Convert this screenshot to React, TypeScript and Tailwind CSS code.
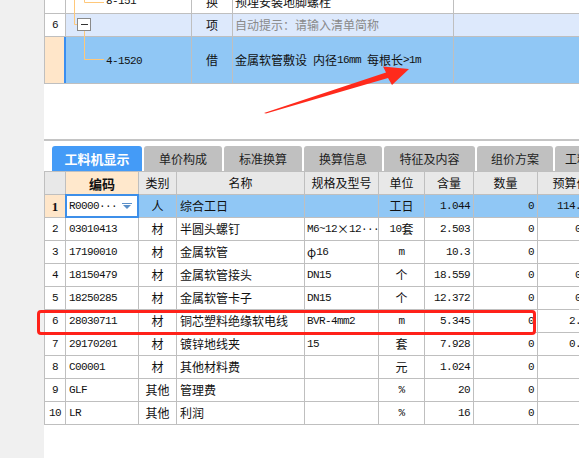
import { Fragment } from "react"

const mono = "font-['Liberation_Mono',monospace] text-[11px] tracking-[-0.6px]"

function Mixed({ text }: { text: string }) {
  const parts = text.split(/([\x20-\x7e·]+)/).filter((p) => p !== "")
  return (
    <>
      {parts.map((p, i) =>
        /^[\x20-\x7e·]+$/.test(p) ? (
          <span key={i} className={`${mono} whitespace-pre`}>
            {p}
          </span>
        ) : (
          <Fragment key={i}>{p}</Fragment>
        )
      )}
    </>
  )
}

type Row = {
  n: number
  code: string
  cat: string
  name: string
  spec: string
  unit: string
  qty: string
  num: string
  price: string
}

const rows: Row[] = [
  { n: 1, code: "R0000···", cat: "人", name: "综合工日", spec: "", unit: "工日", qty: "1.044", num: "0", price: "114.69" },
  { n: 2, code: "03010413", cat: "材", name: "半圆头螺钉", spec: "M6~12×12···", unit: "10套", qty: "2.503", num: "0", price: "0.3" },
  { n: 3, code: "17190010", cat: "材", name: "金属软管", spec: "φ16", unit: "m", qty: "10.3", num: "0", price: "12" },
  { n: 4, code: "18150479", cat: "材", name: "金属软管接头", spec: "DN15", unit: "个", qty: "18.559", num: "0", price: "0.6" },
  { n: 5, code: "18250285", cat: "材", name: "金属软管卡子", spec: "DN15", unit: "个", qty: "12.372", num: "0", price: "0.5" },
  { n: 6, code: "28030711", cat: "材", name: "铜芯塑料绝缘软电线", spec: "BVR-4mm2", unit: "m", qty: "5.345", num: "0", price: "2.05" },
  { n: 7, code: "29170201", cat: "材", name: "镀锌地线夹", spec: "15", unit: "套", qty: "7.928", num: "0", price: "0.35" },
  { n: 8, code: "C00001", cat: "材", name: "其他材料费", spec: "", unit: "元", qty: "1.024", num: "0", price: "" },
  { n: 9, code: "GLF", cat: "其他", name: "管理费", spec: "", unit: "%", qty: "20", num: "0", price: "" },
  { n: 10, code: "LR", cat: "其他", name: "利润", spec: "", unit: "%", qty: "16", num: "0", price: "" },
]

const tabs = [
  { label: "单价构成", w: "w-[78px]" },
  { label: "标准换算", w: "w-[78px]" },
  { label: "换算信息", w: "w-[78px]" },
  { label: "特征及内容", w: "w-[91px]" },
  { label: "组价方案", w: "w-[76px]" },
  { label: "工料机汇总", w: "w-[80px]" },
]

const bd = "border-[#bfbfbf]"

function TopTable() {
  return (
    <div className={`border-l ${bd}`}>
      {/* partly scrolled row */}
      <div className={`flex h-[14px] border-b ${bd} overflow-hidden`}>
        <div className={`w-[21px] shrink-0 border-r ${bd}`} />
        <div className={`w-[126px] shrink-0 border-r ${bd} overflow-hidden`}>
          <div className={`-mt-[10px] h-[23px] flex items-center pl-[40px] ${mono}`}>8-151</div>
        </div>
        <div className={`w-[41px] shrink-0 border-r ${bd} overflow-hidden`}>
          <div className="-mt-[10px] h-[23px] flex items-center justify-center">换</div>
        </div>
        <div className={`w-[221px] shrink-0 border-r ${bd} overflow-hidden`}>
          <div className="-mt-[10px] h-[23px] flex items-center pl-[2px]">预埋安装地脚螺栓</div>
        </div>
        <div className="flex-1" />
      </div>
      <div className={`flex h-[23px] border-b ${bd} bg-[#dde9fc]`}>
        <div className={`w-[21px] shrink-0 border-r ${bd} bg-white flex items-center justify-center ${mono}`}>6</div>
        <div className={`w-[126px] shrink-0 border-r ${bd}`} />
        <div className={`w-[41px] shrink-0 border-r ${bd} flex items-center justify-center`}>项</div>
        <div className={`w-[221px] shrink-0 border-r ${bd} flex items-center pl-[2px] text-[#8a8a8a]`}>
          自动提示：请输入清单简称
        </div>
        <div className="flex-1" />
      </div>
      <div className={`flex h-[47px] border-b ${bd} bg-[#90c7f5]`}>
        <div className={`w-[21px] shrink-0 border-r ${bd} bg-[#ffe6c9]`} />
        <div className={`w-[126px] shrink-0 border-r ${bd} flex items-center pl-[40px] pt-[3px] ${mono}`}>4-1520</div>
        <div className={`w-[41px] shrink-0 border-r ${bd} flex items-center justify-center`}>借</div>
        <div className={`w-[221px] shrink-0 border-r ${bd} flex items-center pl-[2px]`}>
          <Mixed text="金属软管敷设 内径16mm 每根长>1m" />
        </div>
        <div className="flex-1" />
      </div>
    </div>
  )
}

function Tabs() {
  return (
    <div className="flex gap-[2px] pl-[8px] h-[25px] mt-[5px]">
      <div className="w-[90px] shrink-0 rounded-t-[3px] bg-[#449bf7] text-white font-bold text-[13px] flex items-center justify-center">
        工料机显示
      </div>
      {tabs.map((t) => (
        <div
          key={t.label}
          className={`${t.w} shrink-0 rounded-t-[3px] bg-[#c0c0c0] text-[#1e1e1e] flex items-center justify-center`}
        >
          {t.label}
        </div>
      ))}
    </div>
  )
}

function Dropdown() {
  return (
    <svg width="10" height="6" viewBox="0 0 10 6" className="shrink-0">
      <rect x="0" y="0" width="10" height="1" fill="#5a8fc8" />
      <path d="M1 2 L9 2 L5 6 Z" fill="#5a8fc8" />
    </svg>
  )
}

function BottomTable() {
  const cell = `shrink-0 border-r ${bd} flex items-center`
  return (
    <div className={`border-l border-t ${bd} w-[600px]`}>
      <div className={`flex h-[23px] border-b ${bd} bg-[#e8e8e8]`}>
        <div className={`w-[21px] ${cell}`} />
        <div className={`w-[73px] ${cell} justify-center bg-[#ffe8cc] font-bold text-[13px]`}>编码</div>
        <div className={`w-[38px] ${cell} justify-center`}>类别</div>
        <div className={`w-[128px] ${cell} justify-center`}>名称</div>
        <div className={`w-[74px] ${cell} justify-center`}>规格及型号</div>
        <div className={`w-[46px] ${cell} justify-center`}>单位</div>
        <div className={`w-[49px] ${cell} justify-center`}>含量</div>
        <div className={`w-[64px] ${cell} justify-center`}>数量</div>
        <div className={`w-[66px] ${cell} justify-center`}>预算价</div>
      </div>
      {rows.map((r) => {
        const sel = r.n === 1
        return (
          <div key={r.n} className={`flex h-[23px] border-b ${bd} ${sel ? "bg-[#90c7f5]" : "bg-white"}`}>
            <div
              className={`w-[21px] ${cell} justify-center ${
                sel ? "bg-[#ffe6c9] font-['Liberation_Serif',serif] font-bold text-[13px]" : mono
              }`}
            >
              {r.n}
            </div>
            <div className={`w-[73px] ${cell} relative pl-[3px] ${sel ? "bg-white" : ""}`}>
              <span className={`${mono} flex-1`}>{r.code}</span>
              {sel && (
                <>
                  <span className="mr-[6px]">
                    <Dropdown />
                  </span>
                  <span className="absolute -inset-px border-2 border-[#3d8fe9] z-10" />
                </>
              )}
            </div>
            <div className={`w-[38px] ${cell} justify-center`}>{r.cat}</div>
            <div className={`w-[128px] ${cell} pl-[3px]`}>{r.name}</div>
            <div className={`w-[74px] ${cell} pl-[2px] whitespace-nowrap overflow-hidden`}>
              <Mixed text={r.spec} />
            </div>
            <div className={`w-[46px] ${cell} justify-center`}>
              <Mixed text={r.unit} />
            </div>
            <div className={`w-[49px] ${cell} justify-end pr-[3px] ${mono}`}>{r.qty}</div>
            <div className={`w-[64px] ${cell} justify-end pr-[3px] ${mono}`}>{r.num}</div>
            <div className={`w-[66px] ${cell} justify-end pr-[10px] ${mono}`}>{r.price}</div>
          </div>
        )
      })}
    </div>
  )
}

export default function App() {
  return (
    <div className="relative w-[579px] h-[458px] overflow-hidden flex bg-white font-['Noto_Sans_CJK_SC',sans-serif] text-[12px] leading-none text-[#111]">
      <div className="w-[44px] shrink-0 bg-[#f0f0f0]" />
      <div className="flex-1 flex flex-col min-w-0">
        <TopTable />
        <div className="mt-[55px] h-[2px] bg-[#c4c4c4]" />
        <Tabs />
        <BottomTable />
      </div>

      {/* tree lines of the top grid */}
      <svg className="absolute left-0 top-0" width="120" height="84">
        <g stroke="#ffc87a" strokeWidth="1" fill="none">
          <path d="M74.5 0 V24.5 H78" />
          <path d="M84.5 0 V2.5 H104" />
          <path d="M84.5 31 V59.5 H104" />
        </g>
        <rect x="77.5" y="18.5" width="13" height="12" fill="#fff" stroke="#8a8a8a" />
        <path d="M81 24.5 H88" stroke="#333" strokeWidth="1" />
      </svg>
      <div className="absolute left-[64px] top-[37px] w-[2px] h-[46px] bg-[#3a8ef0]" />

      {/* annotation arrow */}
      <svg className="absolute left-0 top-0 pointer-events-none" width="579" height="458">
        <polygon
          points="264,113 386,72.5 383,66.5 409,69 392,85 388,78 266,113.5"
          fill="#ff2a1c"
        />
      </svg>

      {/* annotation box */}
      <div className="absolute left-[37px] top-[310px] w-[499px] h-[25px] border-[3px] border-[#ff2119] rounded-[4px]" />
    </div>
  )
}
